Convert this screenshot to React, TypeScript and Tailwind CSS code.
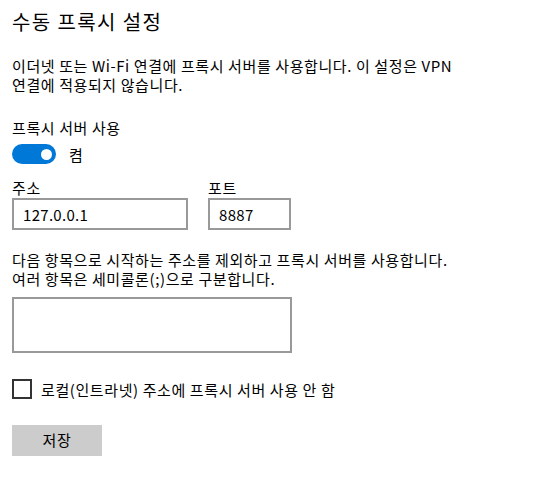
import React, { useState } from 'react'

export default function App() {
  const [enabled, setEnabled] = useState(true)
  const [address, setAddress] = useState('127.0.0.1')
  const [port, setPort] = useState('8887')
  const [exceptions, setExceptions] = useState('')
  const [bypassLocal, setBypassLocal] = useState(false)

  return (
    <div
      className="w-[549px] h-[486px] bg-white text-black pl-3 pt-[8px] text-[15px] tracking-[0.6px]"
      style={{ fontFamily: '"Noto Sans CJK KR", "Noto Sans", sans-serif' }}
    >
      <h1 className="text-[20px] leading-[28px] font-normal tracking-[1.4px]">수동 프록시 설정</h1>

      <p className="mt-[20px] leading-[19px]">
        이더넷 또는 Wi-Fi 연결에 프록시 서버를 사용합니다. 이 설정은 VPN
        <br />
        연결에 적용되지 않습니다.
      </p>

      <div className="mt-[24px] leading-[19px]">프록시 서버 사용</div>

      {/* toggle */}
      <div className="mt-[7px] flex items-center gap-[13px]">
        <button
          type="button"
          onClick={() => setEnabled(!enabled)}
          className={
            enabled
              ? 'w-[44px] h-[20px] rounded-full bg-[#0078d7] flex items-center justify-end pr-[4px]'
              : 'w-[44px] h-[20px] rounded-full border-2 border-[#333] bg-white flex items-center justify-start pl-[3px]'
          }
        >
          <span className={enabled ? 'w-[11px] h-[11px] rounded-full bg-white' : 'w-[10px] h-[10px] rounded-full bg-[#333]'} />
        </button>
        <span className="leading-[19px]">{enabled ? '켬' : '끔'}</span>
      </div>

      {/* address + port */}
      <div className="mt-[14px] flex gap-5">
        <div className="flex flex-col">
          <label className="leading-[19px]">주소</label>
          <input
            value={address}
            onChange={(e) => setAddress(e.target.value)}
            className="mt-[1px] w-[176px] h-[32px] border-2 border-[#999] px-[9px] text-[15px] tracking-[0.3px] outline-none"
          />
        </div>
        <div className="flex flex-col">
          <label className="leading-[19px]">포트</label>
          <input
            value={port}
            onChange={(e) => setPort(e.target.value)}
            className="mt-[1px] w-[83px] h-[32px] border-2 border-[#999] px-[9px] text-[15px] tracking-[0.3px] outline-none"
          />
        </div>
      </div>

      <p className="mt-[20px] leading-[19px]">
        다음 항목으로 시작하는 주소를 제외하고 프록시 서버를 사용합니다.
        <br />
        여러 항목은 세미콜론(;)으로 구분합니다.
      </p>

      <textarea
        value={exceptions}
        onChange={(e) => setExceptions(e.target.value)}
        className="block mt-[9px] w-[280px] h-[56px] border-2 border-[#999] resize-none outline-none px-[9px] py-1 text-[15px]"
      />

      {/* checkbox */}
      <label className="mt-[26px] flex items-center gap-[9px] cursor-pointer w-fit">
        <span
          onClick={() => setBypassLocal(!bypassLocal)}
          className="w-[20px] h-[20px] border-2 border-[#333] bg-white"
        />
        <span className="leading-[19px]">로컬(인트라넷) 주소에 프록시 서버 사용 안 함</span>
      </label>

      <button type="button" className="mt-[26px] block w-[90px] h-[31px] bg-[#ccc]">
        저장
      </button>
    </div>
  )
}
